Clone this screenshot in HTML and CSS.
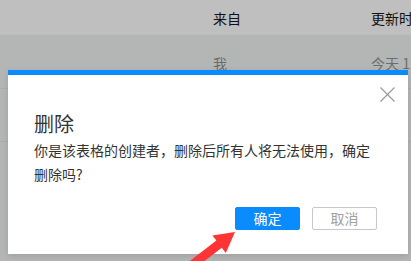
FILE: index.html
```html
<!DOCTYPE html>
<html lang="zh">
<head>
<meta charset="utf-8">
<link rel="stylesheet" href="styles.css">
</head>
<body>
<div class="page">
  <div class="table">
    <div class="thead">
      <div class="cell col-name"></div>
      <div class="cell col-from">来自</div>
      <div class="cell col-time">更新时间</div>
    </div>
    <div class="trow trow-first">
      <div class="cell col-name"></div>
      <div class="cell col-from muted">我</div>
      <div class="cell col-time muted">今天 12:00</div>
    </div>
    <div class="trow"></div>
    <div class="trow"></div>
  </div>

  <div class="modal">
    <div class="modal-top">
      <svg class="close" width="15" height="15" viewBox="0 0 15 15"><path d="M0.5 0.5 L14.5 14.5 M14.5 0.5 L0.5 14.5" stroke="#999" stroke-width="1.2" fill="none"/></svg>
    </div>
    <div class="modal-title">删除</div>
    <div class="modal-body">你是该表格的创建者，删除后所有人将无法使用，确定删除吗?</div>
    <div class="modal-actions">
      <button class="btn btn-primary">确定</button>
      <button class="btn btn-default">取消</button>
    </div>
  </div>

  <svg class="arrow" width="70" height="46" viewBox="0 0 70 46">
    <polygon points="65,17 55.8,37.9 51.8,32.8 12.1,63.2 6.7,56 46.4,25.6 42.4,20.5" fill="#ff3535"/>
  </svg>
</div>
</body>
</html>
```

FILE: styles.css
```css
* { box-sizing: border-box; }
html, body { margin: 0; padding: 0; }
body {
  width: 411px;
  height: 261px;
  overflow: hidden;
  font-family: "Noto Sans CJK SC", "Noto Sans", sans-serif;
  background: #b4b6b6;
}
.page {
  position: relative;
  width: 411px;
  height: 261px;
  overflow: hidden;
}
.table { display: flex; flex-direction: column; }
.thead {
  display: flex;
  height: 35px;
  background: #bfbfbf;
  align-items: center;
  font-size: 14px;
  color: #111;
}
.trow {
  display: flex;
  height: 53px;
  border-top: 1px solid #acacac;
  align-items: center;
  font-size: 14px;
}
.trow-first {
  border-top: none;
  align-items: flex-start;
  padding-top: 18px;
  background: #b4b6b6;
}
.cell { white-space: nowrap; line-height: 20px; flex-shrink: 0; }
.col-name { width: 213px; }
.col-from { width: 158px; }
.col-time { width: 120px; }
.muted { color: #6b6d6d; }

.modal {
  position: absolute;
  left: 8px;
  top: 70px;
  width: 400px;
  height: 184px;
  background: #fff;
  border-top: 5px solid #0a8bff;
  box-shadow: 0 2px 6px rgba(0,0,0,0.12);
  display: flex;
  flex-direction: column;
  padding: 0 31px 0 26px;
}
.modal-top {
  display: flex;
  justify-content: flex-end;
  padding-top: 12px;
  margin-right: -18px;
  height: 27px;
}
.close { display: block; }
.modal-title {
  margin-top: 8px;
  font-size: 20px;
  line-height: 28px;
  color: #333;
}
.modal-body {
  margin-top: 0;
  width: 340px;
  font-size: 14px;
  line-height: 24px;
  color: #333;
}
.modal-actions {
  margin-top: auto;
  margin-bottom: 24px;
  display: flex;
  justify-content: flex-end;
  gap: 12px;
}
.btn {
  width: 65px;
  height: 23px;
  font-family: inherit;
  font-size: 14px;
  line-height: 21px;
  padding: 0;
  border-radius: 2px;
}
.btn-primary {
  background: #0a8bff;
  border: 1px solid #0a8bff;
  color: #fff;
}
.btn-default {
  background: #fff;
  border: 1px solid #c8c8c8;
  color: #a0a0a0;
}
.arrow {
  position: absolute;
  left: 170px;
  top: 215px;
}
```
